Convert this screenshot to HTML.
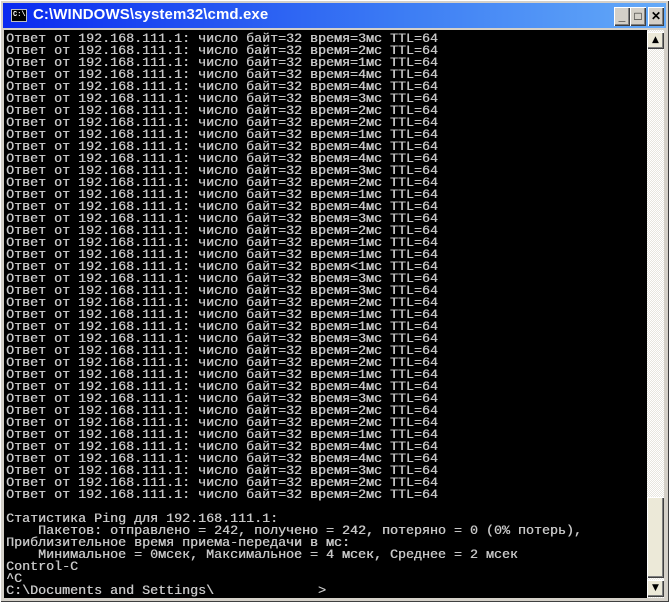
<!DOCTYPE html>
<html><head><meta charset="utf-8"><style>
html,body{margin:0;padding:0;width:669px;height:602px;overflow:hidden;background:#d4d0c8}
.win{position:absolute;left:0;top:0;width:669px;height:602px;background:#d4d0c8;box-shadow:inset 1px 1px #fff,inset -1px -1px #404040}
.title{position:absolute;left:3px;top:3px;width:663px;height:25px;background:linear-gradient(90deg,#0a2af0,#3c7cf4 60%,#64aaf8);}
.title span{position:absolute;left:30px;top:3px;color:#fff;font:bold 15px "Liberation Sans",sans-serif;letter-spacing:0.1px}
.ico{position:absolute;left:8px;top:6px;width:16px;height:13px;background:#000;border:1px solid #c0c0c0;box-sizing:border-box;color:#fff;font:bold 7px "Liberation Mono",monospace;line-height:11px;padding-left:1px}
.btn{position:absolute;top:4px;width:16px;height:19px;background:#d4d0c8;box-shadow:inset 1px 1px #fff,inset -1px -1px #404040,inset -2px -2px #808080;font:bold 12px "Liberation Sans",sans-serif;text-align:center;line-height:19px;color:#000}
.con{position:absolute;left:4px;top:30px;width:643px;height:568px;background:#000;overflow:hidden}
pre{margin:0;position:absolute;left:2px;top:4px;color:#c8c8c8;font:13.33px/12px "Liberation Mono","DejaVu Sans Mono",monospace;text-shadow:0.4px 0 #c0c0c0}
.sb{position:absolute;left:647px;top:30px;width:17px;height:568px;background:repeating-conic-gradient(#fff 0 25%,#e8e6df 0 50%) 0 0/2px 2px}
.sbb{position:absolute;left:0;width:17px;height:17px;background:#ece9d8;box-shadow:inset 1px 1px #fff,inset -1px -1px #404040,inset -2px -2px #808080;font:9px "DejaVu Sans",sans-serif;text-align:center;line-height:17px}
</style></head><body>
<div class="win">
<div class="title"><div class="ico">C:\</div><span>C:\WINDOWS\system32\cmd.exe</span>
<div class="btn" style="left:611px">_</div><div class="btn" style="left:627px">□</div><div class="btn" style="left:645px">✕</div></div>
<div class="con"><pre>Ответ от 192.168.111.1: число байт=32 время=3мс TTL=64
Ответ от 192.168.111.1: число байт=32 время=2мс TTL=64
Ответ от 192.168.111.1: число байт=32 время=1мс TTL=64
Ответ от 192.168.111.1: число байт=32 время=4мс TTL=64
Ответ от 192.168.111.1: число байт=32 время=4мс TTL=64
Ответ от 192.168.111.1: число байт=32 время=3мс TTL=64
Ответ от 192.168.111.1: число байт=32 время=2мс TTL=64
Ответ от 192.168.111.1: число байт=32 время=2мс TTL=64
Ответ от 192.168.111.1: число байт=32 время=1мс TTL=64
Ответ от 192.168.111.1: число байт=32 время=4мс TTL=64
Ответ от 192.168.111.1: число байт=32 время=4мс TTL=64
Ответ от 192.168.111.1: число байт=32 время=3мс TTL=64
Ответ от 192.168.111.1: число байт=32 время=2мс TTL=64
Ответ от 192.168.111.1: число байт=32 время=1мс TTL=64
Ответ от 192.168.111.1: число байт=32 время=4мс TTL=64
Ответ от 192.168.111.1: число байт=32 время=3мс TTL=64
Ответ от 192.168.111.1: число байт=32 время=2мс TTL=64
Ответ от 192.168.111.1: число байт=32 время=1мс TTL=64
Ответ от 192.168.111.1: число байт=32 время=1мс TTL=64
Ответ от 192.168.111.1: число байт=32 время&lt;1мс TTL=64
Ответ от 192.168.111.1: число байт=32 время=3мс TTL=64
Ответ от 192.168.111.1: число байт=32 время=3мс TTL=64
Ответ от 192.168.111.1: число байт=32 время=2мс TTL=64
Ответ от 192.168.111.1: число байт=32 время=1мс TTL=64
Ответ от 192.168.111.1: число байт=32 время=1мс TTL=64
Ответ от 192.168.111.1: число байт=32 время=3мс TTL=64
Ответ от 192.168.111.1: число байт=32 время=2мс TTL=64
Ответ от 192.168.111.1: число байт=32 время=2мс TTL=64
Ответ от 192.168.111.1: число байт=32 время=1мс TTL=64
Ответ от 192.168.111.1: число байт=32 время=4мс TTL=64
Ответ от 192.168.111.1: число байт=32 время=3мс TTL=64
Ответ от 192.168.111.1: число байт=32 время=2мс TTL=64
Ответ от 192.168.111.1: число байт=32 время=2мс TTL=64
Ответ от 192.168.111.1: число байт=32 время=1мс TTL=64
Ответ от 192.168.111.1: число байт=32 время=4мс TTL=64
Ответ от 192.168.111.1: число байт=32 время=4мс TTL=64
Ответ от 192.168.111.1: число байт=32 время=3мс TTL=64
Ответ от 192.168.111.1: число байт=32 время=2мс TTL=64
Ответ от 192.168.111.1: число байт=32 время=2мс TTL=64

Статистика Ping для 192.168.111.1:
    Пакетов: отправлено = 242, получено = 242, потеряно = 0 (0% потерь),
Приблизительное время приема-передачи в мс:
    Минимальное = 0мсек, Максимальное = 4 мсек, Среднее = 2 мсек
Control-C
^C
C:\Documents and Settings\             &gt;</pre></div>
<div class="sb">
<div class="sbb" style="top:2px">▲</div>
<div class="sbb" style="top:467px;height:81px"></div>
<div class="sbb" style="top:550px">▼</div>
</div>
</div>
</body></html>
